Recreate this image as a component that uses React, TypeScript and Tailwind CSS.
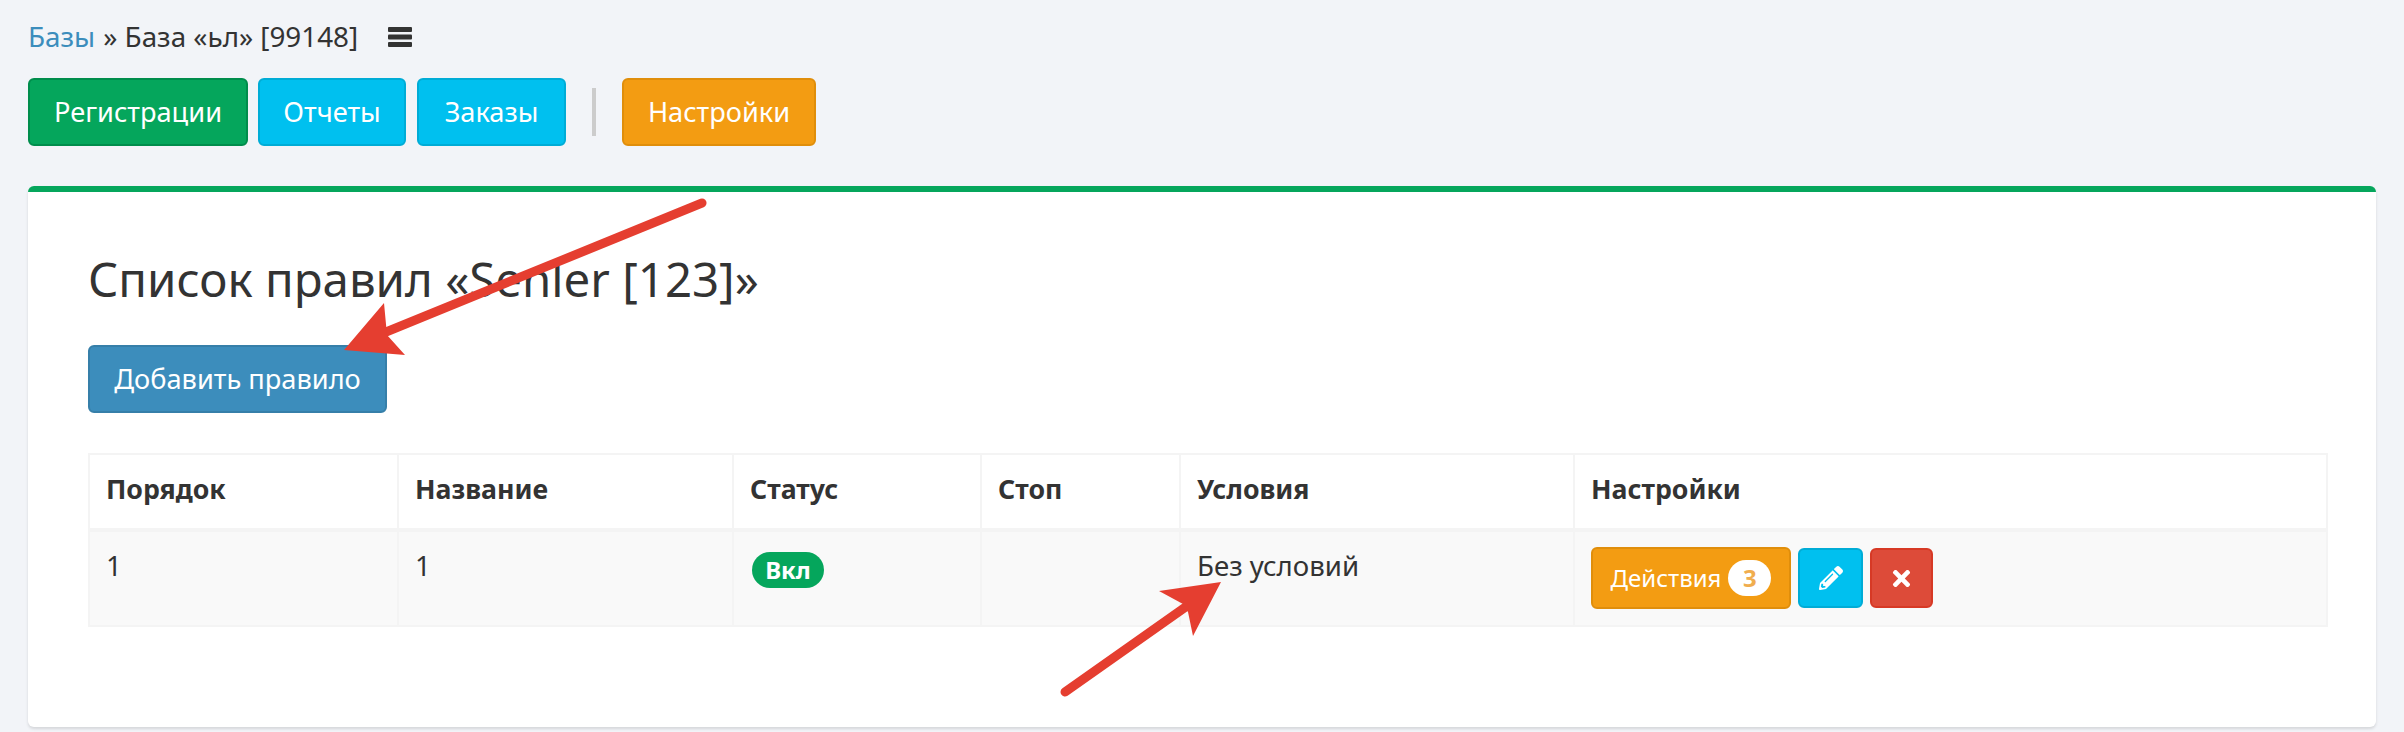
import React from 'react';
import { FaPencilAlt, FaTimes } from 'react-icons/fa';

const cols = [
  { title: 'Порядок', width: 'w-[309px]' },
  { title: 'Название', width: 'w-[335px]' },
  { title: 'Статус', width: 'w-[248px]' },
  { title: 'Стоп', width: 'w-[199px]' },
  { title: 'Условия', width: 'w-[394px]' },
  { title: 'Настройки', width: '' },
];

const btn = 'inline-flex items-center justify-center h-[68px] rounded-[6px] border-2 text-[27.2px] text-white';

const App = () => {
  return (
    <div
      className="relative h-[732px] w-[2404px] overflow-hidden bg-[#f2f4f8] px-[28px] text-[#333]"
      style={{ fontFamily: '"Noto Sans", "Open Sans", sans-serif' }}
    >
      <div className="flex h-[78px] items-center pb-[4px] text-[27.8px]">
        <a className="text-[#3c8dbc]">Базы</a>
        <span className="ml-[8px]">» База «ьл» [99148]</span>
        <svg className="ml-[30px] h-[20px] w-[24px] fill-[#333]" viewBox="0 0 24 20">
          <rect width="24" height="5" rx="1" />
          <rect y="7.5" width="24" height="5" rx="1" />
          <rect y="15" width="24" height="5" rx="1" />
        </svg>
      </div>

      <div className="flex items-center">
        <button className={`${btn} w-[220px] border-[#008d4c] bg-[#05a65c]`}>Регистрации</button>
        <button className={`${btn} ml-[10px] w-[148px] border-[#00acd6] bg-[#00c0ef]`}>Отчеты</button>
        <button className={`${btn} ml-[11px] w-[149px] border-[#00acd6] bg-[#00c0ef]`}>Заказы</button>
        <div className="ml-[26px] h-[48px] w-[4px] bg-[#cccccc]" />
        <button className={`${btn} ml-[26px] w-[194px] border-[#e08e0b] bg-[#f39c12]`}>Настройки</button>
      </div>

      <div className="mt-[40px] h-[541px] rounded-[6px] border-t-[6px] border-[#05a65c] bg-white px-[60px] shadow-[0_2px_3px_rgba(0,0,0,0.12)]">
        <h1 className="flex h-[153px] items-center pt-[20px] text-[47.4px] font-normal">Список правил «Senler [123]»</h1>

        <button className={`${btn} w-[299px] border-[#367fa9] bg-[#3c8dbc]`}>Добавить правило</button>

        <table className="mt-[40px] w-[2240px] table-fixed border-collapse text-[27.6px]">
          <thead>
            <tr>
              {cols.map((c) => (
                <th key={c.title} className={`${c.width} h-[76px] border-2 border-b-4 border-[#f4f4f4] px-[16px] pb-[4px] text-left text-[26.7px] font-bold`}>
                  {c.title}
                </th>
              ))}
            </tr>
          </thead>
          <tbody>
            <tr className="h-[96px] bg-[#f9f9f9] align-top">
              <td className="border-2 border-[#f4f4f4] px-[16px] pt-[13px] leading-[40px]">1</td>
              <td className="border-2 border-[#f4f4f4] px-[16px] pt-[13px] leading-[40px]">1</td>
              <td className="border-2 border-[#f4f4f4] px-[16px] pt-[16px]">
                <span className="ml-[2px] inline-flex h-[36px] w-[72px] items-center justify-center rounded-full bg-[#05a65c] text-[24px] font-bold leading-none text-white">
                  Вкл
                </span>
              </td>
              <td className="border-2 border-[#f4f4f4] px-[16px]" />
              <td className="border-2 border-[#f4f4f4] px-[16px] pt-[13px] leading-[40px]">Без условий</td>
              <td className="border-2 border-[#f4f4f4] px-[16px] pt-[15px]">
                <div className="flex items-center">
                  <button className="inline-flex h-[62px] w-[200px] items-center justify-center gap-[7px] rounded-[6px] border-2 border-[#e08e0b] bg-[#f39c12] text-[24px] text-white">
                    Действия
                    <span className="inline-flex h-[36px] w-[43px] items-center justify-center rounded-full bg-white text-[24px] font-bold leading-none text-[#f0ad4e]">
                      3
                    </span>
                  </button>
                  <button className="ml-[7px] inline-flex h-[60px] w-[65px] items-center justify-center rounded-[6px] border-2 border-[#00acd6] bg-[#00c0ef] text-[24px] text-white">
                    <FaPencilAlt />
                  </button>
                  <button className="ml-[7px] inline-flex h-[60px] w-[63px] items-center justify-center rounded-[6px] border-2 border-[#d73925] bg-[#dd4b39] text-[25px] text-white">
                    <FaTimes />
                  </button>
                </div>
              </td>
            </tr>
          </tbody>
        </table>
      </div>

      {/* красные стрелки поверх скриншота */}
      <svg className="pointer-events-none absolute left-0 top-0" width="2404" height="732">
        <line x1="702" y1="203" x2="386" y2="332" stroke="#e53e30" strokeWidth="9" strokeLinecap="round" />
        <polygon points="384,303 344,350 405,355 387,335" fill="#e53e30" />
        <line x1="1065" y1="692" x2="1187" y2="606" stroke="#e53e30" strokeWidth="9" strokeLinecap="round" />
        <polygon points="1221,582 1159,591 1183,604 1188,612 1193,636" fill="#e53e30" />
      </svg>
    </div>
  );
};

export default App;
